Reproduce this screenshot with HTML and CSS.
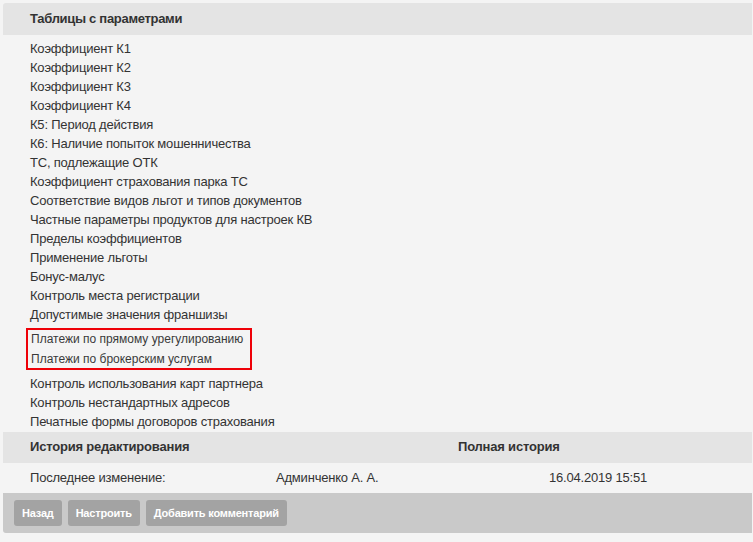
FILE: index.html
```html
<!DOCTYPE html>
<html>
<head>
<meta charset="UTF-8">
<title>Таблицы с параметрами</title>
<link rel="stylesheet" href="styles.css">
</head>
<body>
	<div class="panel">
		<div class="panel-head">Таблицы с параметрами</div>
		<ul class="param-list">
			<li>Коэффициент К1</li>
			<li>Коэффициент К2</li>
			<li>Коэффициент К3</li>
			<li>Коэффициент К4</li>
			<li>К5: Период действия</li>
			<li>К6: Наличие попыток мошенничества</li>
			<li>ТС, подлежащие ОТК</li>
			<li>Коэффициент страхования парка ТС</li>
			<li>Соответствие видов льгот и типов документов</li>
			<li>Частные параметры продуктов для настроек КВ</li>
			<li>Пределы коэффициентов</li>
			<li>Применение льготы</li>
			<li>Бонус-малус</li>
			<li>Контроль места регистрации</li>
			<li>Допустимые значения франшизы</li>
			<li class="marked">
				<div>Платежи по прямому урегулированию</div>
				<div class="second">Платежи по брокерским услугам</div>
			</li>
			<li>Контроль использования карт партнера</li>
			<li>Контроль нестандартных адресов</li>
			<li>Печатные формы договоров страхования</li>
		</ul>
		<div class="history-head">
			<span class="col-a">История редактирования</span>
			<span class="col-c">Полная история</span>
		</div>
		<div class="history-row">
			<span class="col-a">Последнее изменение:</span>
			<span class="col-b">Админченко А. А.</span>
			<span class="col-d">16.04.2019 15:51</span>
		</div>
		<div class="toolbar">
			<button type="button" class="btn">Назад</button>
			<button type="button" class="btn">Настроить</button>
			<button type="button" class="btn">Добавить комментарий</button>
		</div>
	</div>
</body>
</html>
```

FILE: styles.css
```css
body {
	margin: 0;
	background-color: #f4f4f4;
	font-family: "Liberation Sans", Arial, sans-serif;
	font-size: 13px;
	letter-spacing: -0.2px;
	color: #333;
}

.panel {
	margin: 3px 1px 0 3px;
}

.panel-head {
	height: 32px;
	line-height: 31px;
	padding-left: 27px;
	background-color: #e4e4e4;
	border-radius: 3px 0 0 0;
	font-weight: bold;
	letter-spacing: -0.3px;
}

.param-list {
	list-style: none;
	margin: 4px 0 1px;
	padding: 0 0 0 27px;
}

.param-list li {
	line-height: 19px;
}

.param-list .marked {
	display: table;
	margin: 4px 0 4px -4px;
	padding: 0 7px 0 3px;
	border: 2px solid #ee0008;
	font-size: 12px;
	letter-spacing: 0;
	color: #3a3a3a;
}

.param-list .marked div {
	line-height: 19px;
}

.param-list .marked .second {
	padding-top: 2px;
	line-height: 17px;
}

.history-head,
.history-row {
	display: flex;
	padding-left: 27px;
}

.history-head {
	height: 31px;
	line-height: 30px;
	background-color: #e4e4e4;
	font-weight: bold;
}

.history-row {
	height: 30px;
	line-height: 29px;
}

.history-head .col-a {
	width: 428px;
}

.history-row .col-a {
	width: 246px;
}

.history-row .col-b {
	width: 273px;
}

.toolbar {
	display: flex;
	gap: 6px;
	height: 40px;
	padding: 7px 0 0 11px;
	box-sizing: border-box;
	background-color: #c9c9c9;
	border-radius: 0 0 0 3px;
}

.btn {
	height: 26px;
	padding: 0 8px;
	border: none;
	border-radius: 3px;
	background-color: #a3a3a3;
	color: #fff;
	font-family: "Liberation Sans", Arial, sans-serif;
	font-size: 11px;
	font-weight: bold;
	letter-spacing: -0.2px;
}
```
